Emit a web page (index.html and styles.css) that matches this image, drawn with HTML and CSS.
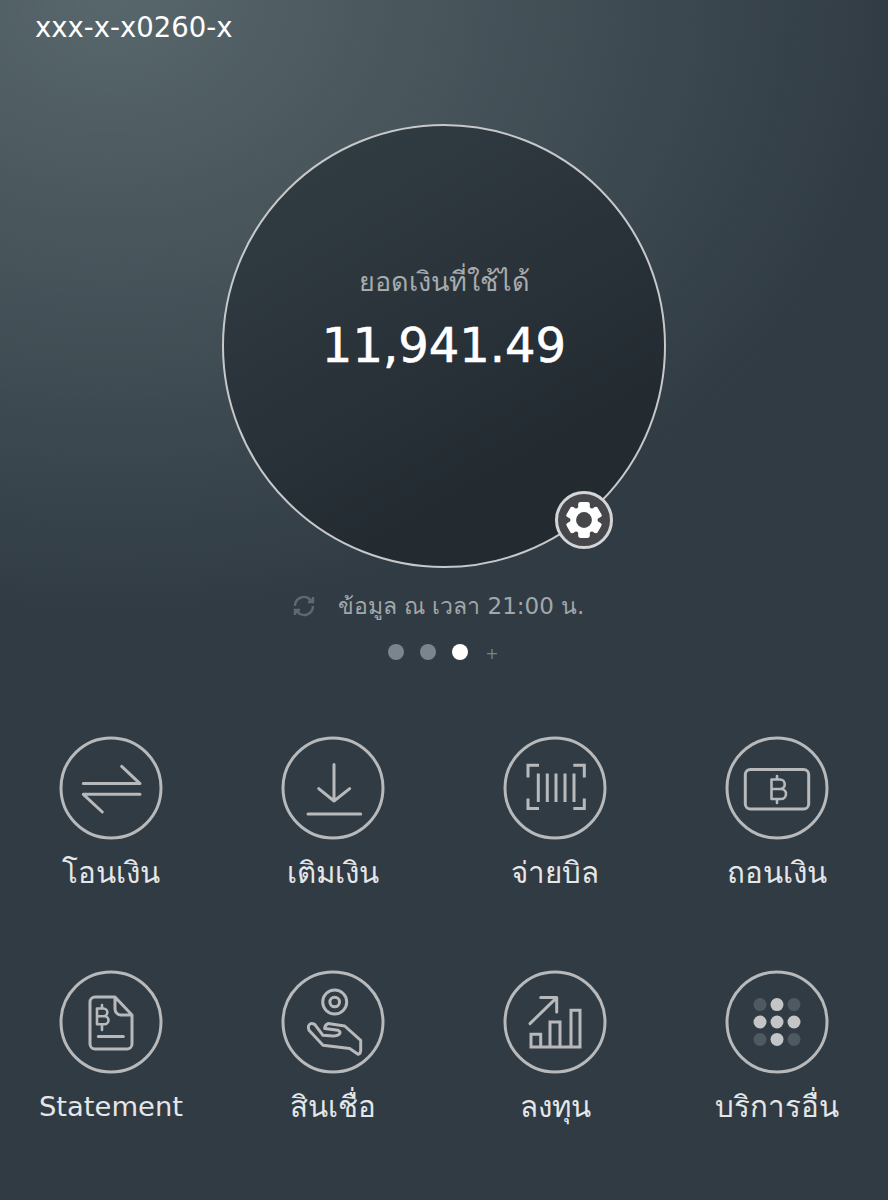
FILE: index.html
```html
<!DOCTYPE html>
<html lang="th">
<head>
  <meta charset="UTF-8">
  <meta name="viewport" content="width=device-width, initial-scale=1.0">
  <title>Account</title>
  <link rel="stylesheet" href="styles.css">
</head>
<body>
  <div class="account-no">xxx-x-x0260-x</div>

  <div class="balance">
    <div class="balance-label">ยอดเงินที่ใช้ได้</div>
    <div class="balance-value">11,941.49</div>
    <button class="gear-btn" aria-label="settings">
      <svg viewBox="0 0 36 36" width="38" height="38">
        <g fill="#fff">
          <circle cx="18" cy="18" r="13"/>
          <rect x="12.5" y="1" width="11" height="9" rx="2"/>
          <rect x="12.5" y="1" width="11" height="9" rx="2" transform="rotate(60 18 18)"/>
          <rect x="12.5" y="1" width="11" height="9" rx="2" transform="rotate(120 18 18)"/>
          <rect x="12.5" y="1" width="11" height="9" rx="2" transform="rotate(180 18 18)"/>
          <rect x="12.5" y="1" width="11" height="9" rx="2" transform="rotate(240 18 18)"/>
          <rect x="12.5" y="1" width="11" height="9" rx="2" transform="rotate(300 18 18)"/>
        </g>
        <circle cx="18" cy="18" r="7.5" fill="#45474a"/>
      </svg>
    </button>
  </div>

  <div class="updated">
    <svg class="refresh" viewBox="0 0 24 24" width="24" height="24">
      <path d="M3 12a9 9 0 0 1 15.5-6.2L21 8M21 3v5h-5M21 12a9 9 0 0 1-15.5 6.2L3 16M3 21v-5h5"/>
    </svg>
    <span>ข้อมูล ณ เวลา 21:00 น.</span>
  </div>

  <div class="pager">
    <span class="dot"></span>
    <span class="dot"></span>
    <span class="dot active"></span>
    <span class="pager-plus">+</span>
  </div>

  <div class="menu">
    <a class="menu-item">
      <svg class="menu-icon" viewBox="0 0 104 104">
        <circle cx="52" cy="52" r="50"/>
        <path d="M24.3 47.6H81L62.7 30.3M81 58.3H24.3L43.3 76"/>
      </svg>
      <span>โอนเงิน</span>
    </a>
    <a class="menu-item">
      <svg class="menu-icon" viewBox="0 0 104 104">
        <circle cx="52" cy="52" r="50"/>
        <path d="M53 28.6V65M37.7 52.6L53 65L68.7 52.6M27 78H79.7"/>
      </svg>
      <span>เติมเงิน</span>
    </a>
    <a class="menu-item">
      <svg class="menu-icon" viewBox="0 0 104 104">
        <circle cx="52" cy="52" r="50"/>
        <path class="square" d="M36 29.3H25V41.6M70.3 29.3H81.3V41.6M36 72.6H25V62.6M70.3 72.6H81.3V62.6M35.3 37.6V66M44.3 37.6V66M53 37.6V66M62 37.6V66M71 37.6V66"/>
      </svg>
      <span>จ่ายบิล</span>
    </a>
    <a class="menu-item">
      <svg class="menu-icon" viewBox="0 0 104 104">
        <circle cx="52" cy="52" r="50"/>
        <rect x="20.3" y="33.6" width="63.4" height="39.4" rx="5"/>
        <path class="thin" d="M46.5 43.5H55a4.7 4.7 0 0 1 0 9.5H46.5H56a5 5 0 0 1 0 10H46.5ZM52 40V43.5M52 63V67"/>
      </svg>
      <span>ถอนเงิน</span>
    </a>
    <a class="menu-item">
      <svg class="menu-icon" viewBox="0 0 104 104">
        <circle cx="52" cy="52" r="50"/>
        <path d="M56 27H36a5 5 0 0 0-5 5V74a5 5 0 0 0 5 5H68a5 5 0 0 0 5-5V45ZM56 27V39a6 6 0 0 0 6 6H73"/>
        <path class="thin" d="M38 38.5H44.5a3.8 3.8 0 0 1 0 7.7H38H45.5a4 4 0 0 1 0 8H38ZM43 35V38.5M43 54.2V60"/>
        <path d="M39.3 66.6H64.3"/>
      </svg>
      <span class="latin">Statement</span>
    </a>
    <a class="menu-item">
      <svg class="menu-icon" viewBox="0 0 104 104">
        <circle cx="52" cy="52" r="50"/>
        <circle cx="53.7" cy="32" r="12"/>
        <circle cx="53.7" cy="32" r="4.8"/>
        <path d="M28 60.3L42 75.3L68.7 78.6L77 84.3Q79.7 84 79.7 80.3V70.3L63.7 56L47 53.6Q43.7 55 43.7 58.6L57 60.3Q60 62 58.7 63.6Q57 66 52 66L42 65.3L33.7 54.3Q29 52 27.5 56Q27 58 28 60.3Z"/>
      </svg>
      <span>สินเชื่อ</span>
    </a>
    <a class="menu-item">
      <svg class="menu-icon" viewBox="0 0 104 104">
        <circle cx="52" cy="52" r="50"/>
        <path d="M27 53.6L53.7 27.6M37.7 27.6H53.7V42"/>
        <path class="square" d="M28 64.3H37.7V77H28ZM47 52H57V77H47ZM68 40.3H77V77H68ZM28 77H77"/>
      </svg>
      <span>ลงทุน</span>
    </a>
    <a class="menu-item">
      <svg class="menu-icon" viewBox="0 0 104 104">
        <circle cx="52" cy="52" r="50"/>
        <g class="dots-dim">
          <circle cx="35" cy="34.6" r="6.5"/>
          <circle cx="69" cy="34.6" r="6.5"/>
          <circle cx="35" cy="69.4" r="6.5"/>
          <circle cx="69" cy="69.4" r="6.5"/>
        </g>
        <g class="dots-lit">
          <circle cx="52" cy="34.6" r="6.5"/>
          <circle cx="35" cy="52" r="6.5"/>
          <circle cx="52" cy="52" r="6.5"/>
          <circle cx="69" cy="52" r="6.5"/>
          <circle cx="52" cy="69.4" r="6.5"/>
        </g>
      </svg>
      <span>บริการอื่น</span>
    </a>
  </div>
</body>
</html>
```

FILE: styles.css
```css
html {
  height: 100%;
}

body {
  font-family: "DejaVu Sans", "Noto Sans", sans-serif;
  margin: 0;
  min-height: 1200px;
  box-sizing: border-box;
  overflow: hidden;
  color: #e6e8ea;
  background-color: #303b43;
  background-image:
    radial-gradient(ellipse 800px 620px at 110px 0, rgba(98, 114, 118, 0.8), rgba(98, 114, 118, 0) 100%);
}

.account-no {
  padding: 9px 0 0 35px;
  height: 124px;
  box-sizing: border-box;
  font-size: 27.5px;
  line-height: 36px;
  color: #fff;
}

.balance {
  position: relative;
  box-sizing: border-box;
  width: 444px;
  height: 444px;
  margin: 0 auto;
  padding-top: 136px;
  border: 2px solid #c6c8c9;
  border-radius: 50%;
  text-align: center;
  background: linear-gradient(150deg, #333e45, #232b31 75%);
}

.balance-label {
  font-size: 27px;
  line-height: 40px;
  color: #a7abae;
}

.balance-value {
  margin-top: 13px;
  font-size: 48px;
  line-height: 60px;
  color: #fff;
  -webkit-text-stroke: 0.6px #fff;
}

.gear-btn {
  position: absolute;
  left: 331px;
  top: 365px;
  width: 58px;
  height: 58px;
  padding: 0;
  display: flex;
  align-items: center;
  justify-content: center;
  border: 3px solid #d4d5d6;
  border-radius: 50%;
  background: #45474a;
}

.updated {
  display: flex;
  justify-content: center;
  align-items: center;
  gap: 22px;
  margin-top: 18px;
  padding-right: 12px;
  height: 40px;
  font-size: 23px;
  color: #a2a7aa;
}

.refresh {
  fill: none;
  stroke: #5f6a70;
  stroke-width: 2.4;
}

.pager {
  display: flex;
  justify-content: center;
  align-items: center;
  gap: 16px;
  margin-top: 17px;
  height: 18px;
}

.dot {
  width: 16px;
  height: 16px;
  border-radius: 50%;
  background: #7b858b;
}

.dot.active {
  background: #fff;
}

.pager-plus {
  width: 16px;
  font-size: 16px;
  line-height: 18px;
  text-align: center;
  margin-top: 4px;
  color: #77828a;
}

.menu {
  display: grid;
  grid-template-columns: repeat(4, 222px);
  grid-auto-rows: 234px;
  margin-top: 75px;
}

.menu-item {
  display: flex;
  flex-direction: column;
  align-items: center;
  font-size: 29.5px;
  line-height: 44px;
  color: #e4e6e8;
}

.menu-item span {
  margin-top: 11px;
}

.menu-item .latin {
  font-size: 27.4px;
}

.menu-icon {
  width: 104px;
  height: 104px;
  fill: none;
  stroke: #b7b9bb;
  stroke-width: 3;
  stroke-linecap: round;
  stroke-linejoin: round;
}

.menu-icon .square {
  stroke-linecap: butt;
  stroke-linejoin: miter;
}

.menu-icon .thin {
  stroke-width: 2.6;
}

.dots-lit {
  fill: #c4c5c6;
  stroke: none;
}

.dots-dim {
  fill: #4e5a61;
  stroke: none;
}
```
